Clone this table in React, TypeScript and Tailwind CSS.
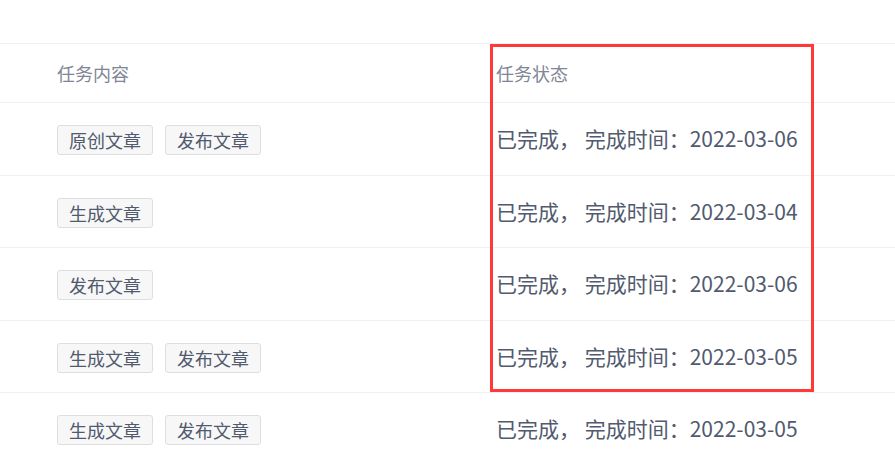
import React from "react";

const rows: { tags: string[]; date: string }[] = [
  { tags: ["原创文章", "发布文章"], date: "2022-03-06" },
  { tags: ["生成文章"], date: "2022-03-04" },
  { tags: ["发布文章"], date: "2022-03-06" },
  { tags: ["生成文章", "发布文章"], date: "2022-03-05" },
  { tags: ["生成文章", "发布文章"], date: "2022-03-05" },
];

export default function App() {
  return (
    <div
      className="relative w-[895px] h-[457px] overflow-hidden bg-white"
      style={{ fontFamily: '"Microsoft YaHei", "Noto Sans CJK SC", "Noto Sans", sans-serif' }}
    >
      <div className="h-[43px]" />
      <div className="border-t border-[#eeeef4]">
        <div className="flex h-[59px] items-center border-b border-[#eeeef4] text-[18px] text-[#808695]">
          <div className="w-[496px] pl-[57px]">任务内容</div>
          <div className="flex-1">任务状态</div>
        </div>
        {rows.map((r, i) => (
          <div
            key={i}
            className="flex h-[72.5px] items-center border-b border-[#f2f2f6] text-[#515a6e]"
          >
            <div className="mt-[3px] flex w-[496px] gap-[12px] pl-[57px]">
              {r.tags.map((t, j) => (
                <span
                  key={j}
                  className="flex h-[30px] items-center rounded-[3px] border border-[#dcdee2] bg-[#f7f7f7] px-[11px] text-[18px] leading-none text-[#515a6e]"
                >
                  {t}
                </span>
              ))}
            </div>
            <div className="flex-1 text-[21px] whitespace-pre">已完成， 完成时间：{r.date}</div>
          </div>
        ))}
      </div>
      <div className="pointer-events-none absolute left-[490px] top-[44px] h-[348px] w-[324px] border-[3px] border-[#ff3838]" />
    </div>
  );
}
